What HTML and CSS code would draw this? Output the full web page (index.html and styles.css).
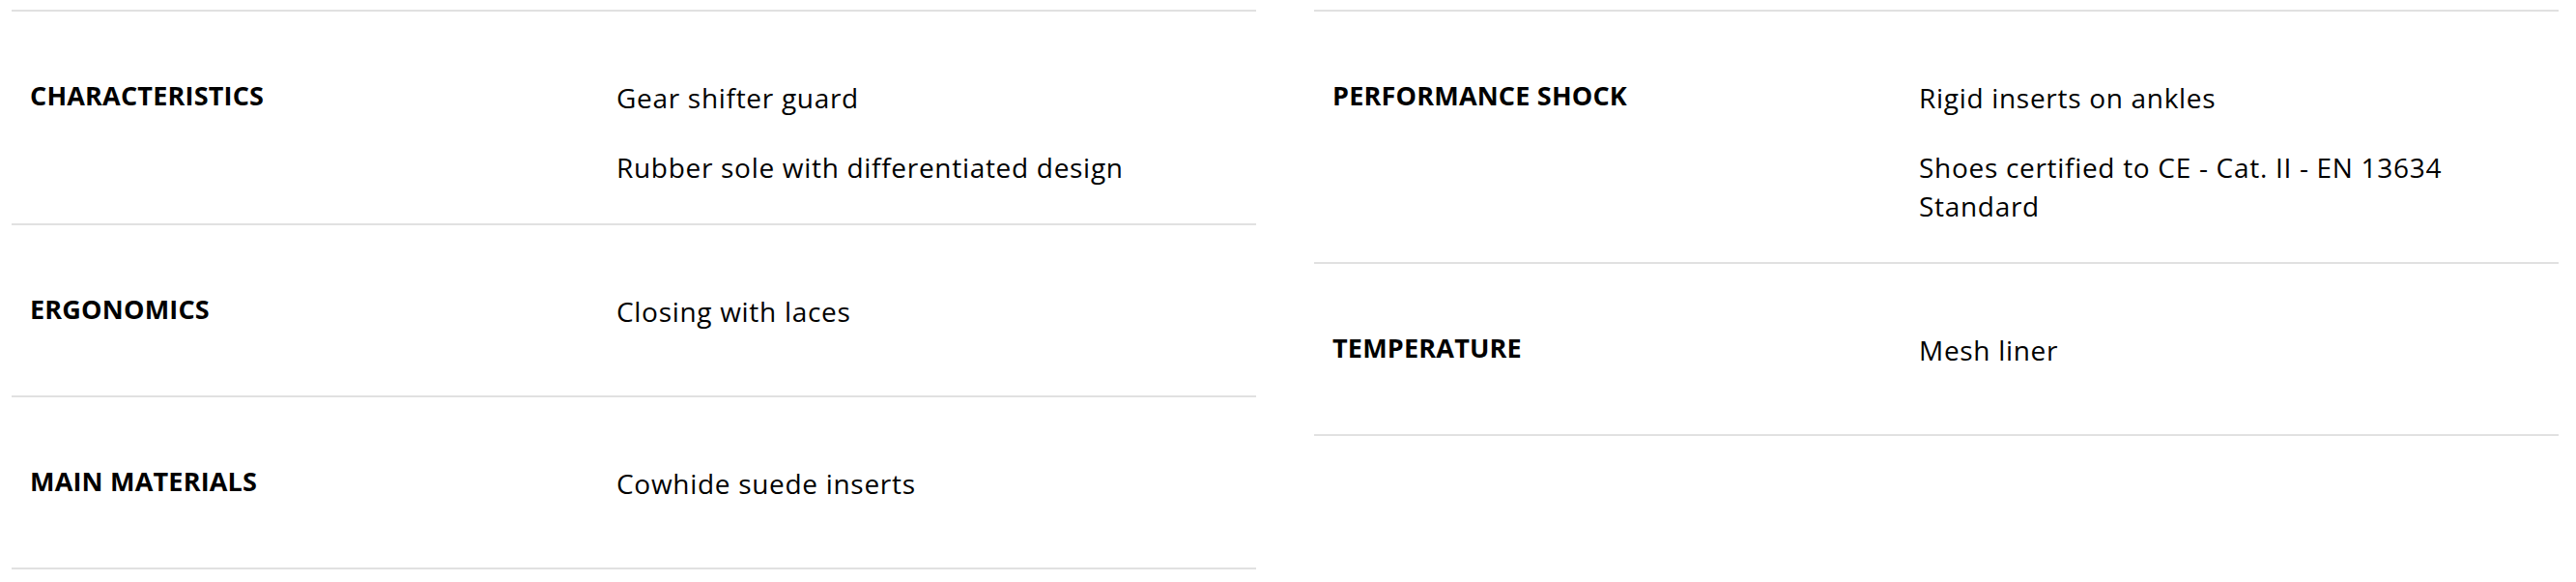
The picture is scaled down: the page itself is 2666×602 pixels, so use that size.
FILE: index.html
```html
<!DOCTYPE html>
<html lang="en">
<head>
<meta charset="utf-8">
<title>Features</title>
<link rel="stylesheet" href="styles.css">
</head>
<body>
<div class="specs">
  <div class="spec-col">
    <div class="spec-row">
      <div class="spec-label">CHARACTERISTICS</div>
      <div class="spec-values">
        <p>Gear shifter guard</p>
        <p>Rubber sole with differentiated design</p>
      </div>
    </div>
    <div class="spec-row">
      <div class="spec-label">ERGONOMICS</div>
      <div class="spec-values">
        <p>Closing with laces</p>
      </div>
    </div>
    <div class="spec-row">
      <div class="spec-label">MAIN MATERIALS</div>
      <div class="spec-values">
        <p>Cowhide suede inserts</p>
      </div>
    </div>
  </div>
  <div class="spec-col">
    <div class="spec-row">
      <div class="spec-label">PERFORMANCE SHOCK</div>
      <div class="spec-values">
        <p>Rigid inserts on ankles</p>
        <p>Shoes certified to CE - Cat. II - EN 13634 Standard</p>
      </div>
    </div>
    <div class="spec-row">
      <div class="spec-label">TEMPERATURE</div>
      <div class="spec-values">
        <p>Mesh liner</p>
      </div>
    </div>
  </div>
</div>
</body>
</html>
```
FILE: styles.css
```css
html, body {
  margin: 0;
  padding: 0;
  background: #ffffff;
}

body {
  font-family: "Open Sans", "Noto Sans", "Liberation Sans", sans-serif;
  color: #000000;
}

.specs {
  display: grid;
  grid-template-columns: 1288px 1288px;
  column-gap: 60px;
  align-items: start;
  padding: 10px 18px 0 12px;
}

.spec-col {
  border-bottom: 2px solid #e1e1e1;
}

.spec-row {
  box-sizing: border-box;
  display: grid;
  grid-template-columns: 626px 1fr;
  min-height: 178px;
  padding: 69px 0 38px;
  border-top: 2px solid #e1e1e1;
}

.spec-label {
  padding-left: 19px;
  font-size: 27px;
  font-weight: 700;
  line-height: 36px;
  letter-spacing: 0.2px;
}

.spec-values {
  max-width: 590px;
}

.spec-values p {
  margin: 0;
  font-size: 28px;
  font-weight: 400;
  line-height: 40px;
  letter-spacing: 0.7px;
}

.spec-values p + p {
  margin-top: 32px;
}
```
